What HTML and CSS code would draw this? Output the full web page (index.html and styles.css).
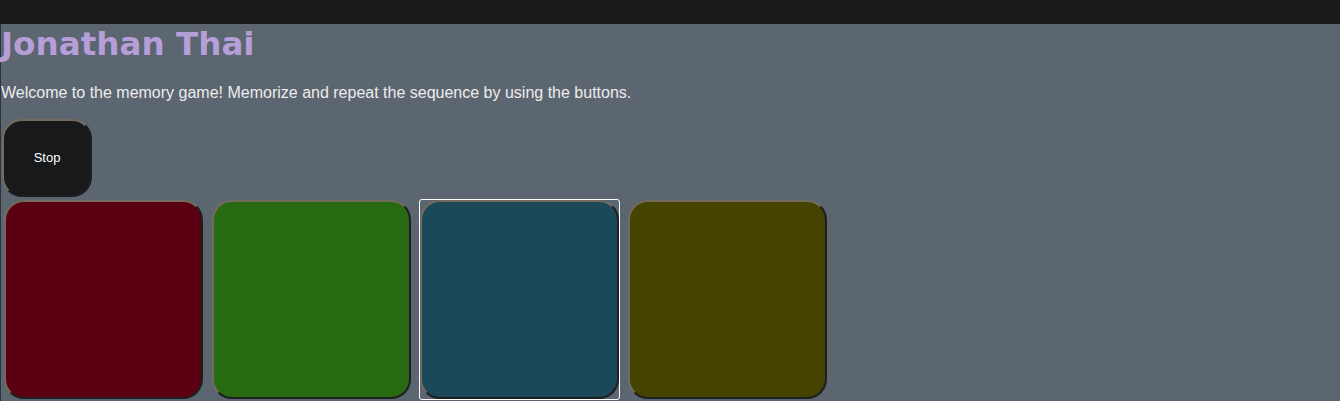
FILE: index.html
```html
<!DOCTYPE html>
<html>
<head>
<meta charset="utf-8">
<link rel="stylesheet" href="styles.css">
</head>
<body>
<div class="topbar"></div>
<main class="page">
  <h1 class="title">Jonathan Thai</h1>
  <p class="intro">Welcome to the memory game! Memorize and repeat the sequence by using the buttons.</p>
  <button class="stop">Stop</button>
  <div class="pads">
    <button class="pad pad-red"></button>
    <button class="pad pad-green"></button>
    <button class="pad pad-blue is-focused"></button>
    <button class="pad pad-olive"></button>
  </div>
</main>
</body>
</html>
```
FILE: styles.css
```css
html, body {
  margin: 0;
  padding: 0;
  height: 100%;
  background: #5c6670;
  overflow: hidden;
}
.topbar {
  height: 24px;
  background: #18191b;
}
.page {
  border-left: 1px solid #2e3338;
  min-height: 377px;
  box-sizing: border-box;
  display: flex;
  flex-direction: column;
  align-items: flex-start;
}
.title {
  margin: 1px 0 21px 0;
  font-family: "DejaVu Sans", sans-serif;
  font-weight: bold;
  font-size: 32.6px;
  line-height: 38px;
  color: #b69fd9;
}
.intro {
  margin: 0 0 17px 0;
  font-family: "Liberation Sans", Arial, sans-serif;
  font-size: 16px;
  line-height: 18px;
  color: #ececec;
}
.stop, .pad {
  border-width: 2px;
  border-style: solid;
  border-color: #736b5d #1d1e20 #1d1e20 #736b5d;
  border-radius: 20px;
  cursor: pointer;
  padding: 0;
}
.stop {
  margin-left: 1px;
  width: 90px;
  height: 78px;
  padding-bottom: 2px;
  background: #18191b;
  color: #ffffff;
  font-family: "Liberation Sans", Arial, sans-serif;
  font-size: 13px;
}
.pads {
  display: flex;
  gap: 9px;
  margin-top: 3px;
  padding-left: 3px;
}
.pad {
  width: 199px;
  height: 199px;
  position: relative;
}
.pad-red { background: #5b0013; }
.pad-green { background: #286a11; }
.pad-blue { background: #1b4959; }
.pad-olive { background: #444400; }
.is-focused::after {
  content: "";
  position: absolute;
  inset: -3px;
  border: 1px solid #ffffff;
  border-radius: 3px;
}
```
